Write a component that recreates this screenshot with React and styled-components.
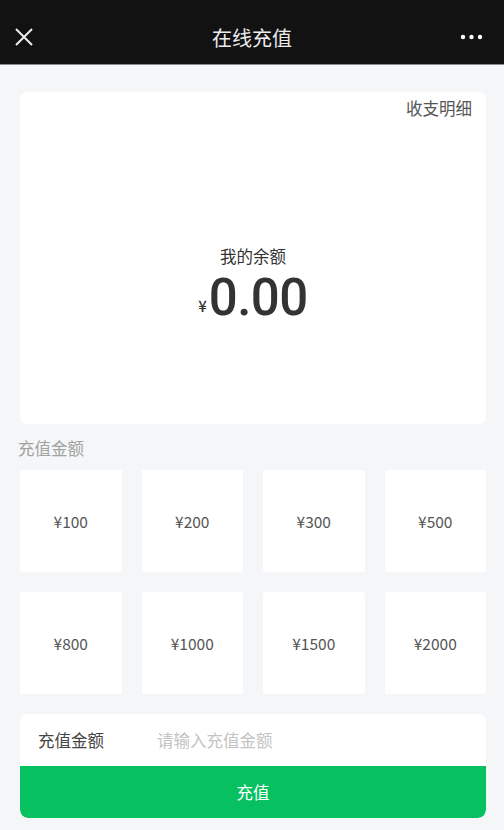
import React from 'react';
import styled, { createGlobalStyle } from 'styled-components';

const GlobalStyle = createGlobalStyle`
  html, body {
    margin: 0;
    padding: 0;
    background: #f4f6f7;
    font-family: "Noto Sans CJK SC", "Noto Sans", sans-serif;
  }
`;

const Page = styled.div`
  width: 504px;
  min-height: 830px;
  background: #f4f6f7;
`;

const Header = styled.header`
  height: 65px;
  background: #121212;
  border-bottom: 1px solid #8a8a8a;
  box-sizing: border-box;
  display: grid;
  grid-template-columns: 60px 1fr 60px;
  align-items: center;
  padding-top: 10px;
`;

const Title = styled.h1`
  margin: 0;
  text-align: center;
  color: #ededed;
  font-size: 20px;
  font-weight: 400;
`;

const IconBox = styled.div`
  display: flex;
  justify-content: ${(p) => (p.$end ? 'flex-end' : 'flex-start')};
  padding: ${(p) => (p.$end ? '0 21px 0 0' : '0 0 0 14px')};
`;

const Body = styled.main`
  padding: 27px 18px 0 20px;
`;

const BalanceCard = styled.section`
  height: 332px;
  background: #fff;
  border-radius: 6px;
  display: flex;
  flex-direction: column;
  padding: 5px 14px 0 14px;
  box-sizing: border-box;
`;

const DetailLink = styled.a`
  align-self: flex-end;
  font-size: 16.5px;
  color: #555;
  line-height: 22px;
`;

const BalanceBlock = styled.div`
  margin-top: 126px;
  display: flex;
  flex-direction: column;
  align-items: center;
`;

const BalanceLabel = styled.div`
  font-size: 16.5px;
  color: #333;
  line-height: 22px;
`;

const Amount = styled.div`
  display: flex;
  align-items: flex-end;
  color: #333;
  margin-top: 11px;
`;

const Yen = styled.div`
  font-size: 15px;
  font-weight: 500;
  line-height: 16px;
  margin: 0 2px 4px 0;
`;

const Big = styled.div`
  font-family: Roboto, "Noto Sans", sans-serif;
  font-size: 51px;
  font-weight: 500;
  line-height: 40px;
  letter-spacing: -0.5px;
`;

const SectionLabel = styled.div`
  margin: 13px 0 0 -2px;
  font-size: 16.5px;
  color: #a2a2a2;
  line-height: 22px;
`;

const Grid = styled.div`
  margin-top: 11px;
  display: grid;
  grid-template-columns: repeat(4, 1fr);
  gap: 20px;
`;

const Tile = styled.button`
  height: 102px;
  background: #fff;
  border: none;
  border-radius: 2px;
  font-family: inherit;
  font-size: 15.5px;
  color: #555;
  padding: 0;
`;

const Form = styled.div`
  margin-top: 20px;
  background: #fff;
  border-radius: 8px;
  overflow: hidden;
`;

const InputRow = styled.label`
  height: 52px;
  display: flex;
  align-items: center;
  padding-left: 18px;
`;

const InputLabel = styled.span`
  width: 119px;
  font-size: 16.5px;
  color: #444;
`;

const Input = styled.input`
  flex: 1;
  border: none;
  outline: none;
  font-family: inherit;
  font-size: 16.5px;
  color: #333;
  background: transparent;
  padding: 0;
  &::placeholder {
    color: #c4c4c4;
  }
`;

const SubmitButton = styled.button`
  display: block;
  width: 100%;
  height: 52px;
  border: none;
  border-radius: 0 0 8px 8px;
  background: #07c160;
  color: #fff;
  font-family: inherit;
  font-size: 16.5px;
`;

const amounts = [100, 200, 300, 500, 800, 1000, 1500, 2000];

export default function App() {
  return (
    <Page>
      <GlobalStyle />
      <Header>
        <IconBox>
          <svg width="20" height="20" viewBox="0 0 20 20">
            <path d="M2 2 L18 18 M18 2 L2 18" stroke="#eee" strokeWidth="2" />
          </svg>
        </IconBox>
        <Title>在线充值</Title>
        <IconBox $end>
          <svg width="23" height="6" viewBox="0 0 23 6">
            <circle cx="3" cy="3" r="2.2" fill="#fff" />
            <circle cx="11.5" cy="3" r="2.2" fill="#fff" />
            <circle cx="20" cy="3" r="2.2" fill="#fff" />
          </svg>
        </IconBox>
      </Header>
      <Body>
        <BalanceCard>
          <DetailLink>收支明细</DetailLink>
          <BalanceBlock>
            <BalanceLabel>我的余额</BalanceLabel>
            <Amount>
              <Yen>¥</Yen>
              <Big>0.00</Big>
            </Amount>
          </BalanceBlock>
        </BalanceCard>
        <SectionLabel>充值金额</SectionLabel>
        <Grid>
          {amounts.map((a) => (
            <Tile key={a}>¥{a}</Tile>
          ))}
        </Grid>
        <Form>
          <InputRow>
            <InputLabel>充值金额</InputLabel>
            <Input placeholder="请输入充值金额" />
          </InputRow>
          <SubmitButton>充值</SubmitButton>
        </Form>
      </Body>
    </Page>
  );
}
